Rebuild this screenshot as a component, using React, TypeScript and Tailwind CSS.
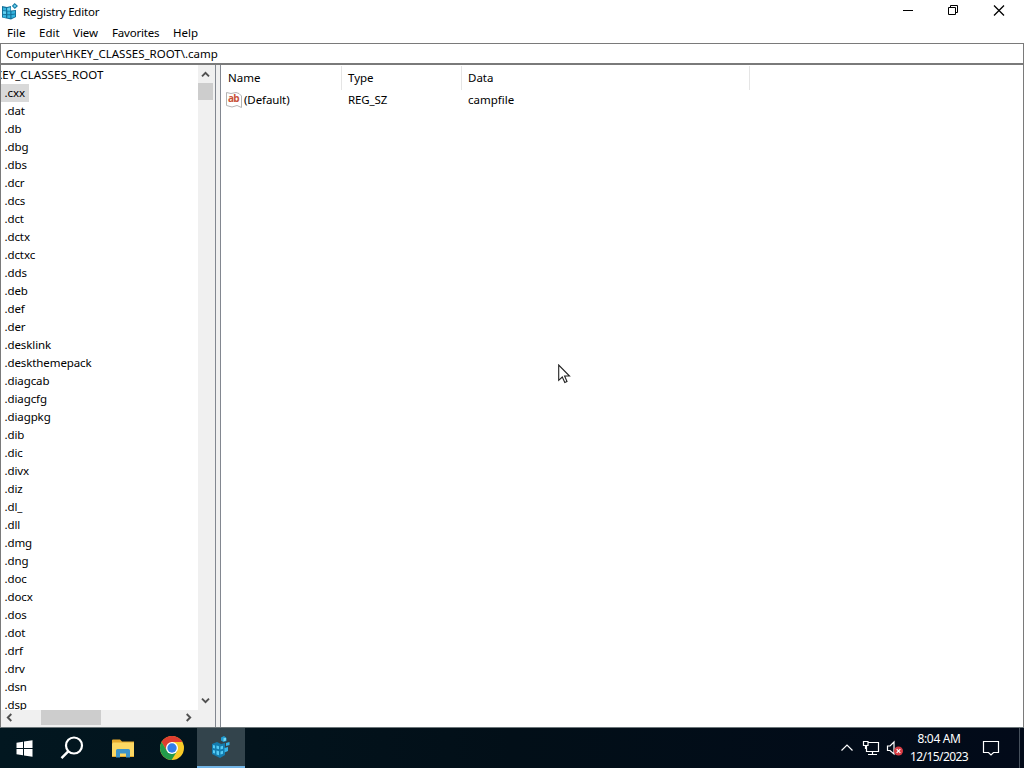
import React from "react";

const keys = [
  ".cxx", ".dat", ".db", ".dbg", ".dbs", ".dcr", ".dcs", ".dct", ".dctx", ".dctxc", ".dds", ".deb",
  ".def", ".der", ".desklink", ".deskthemepack", ".diagcab", ".diagcfg", ".diagpkg", ".dib", ".dic",
  ".divx", ".diz", ".dl_", ".dll", ".dmg", ".dng", ".doc", ".docx", ".dos", ".dot", ".drf", ".drv",
  ".dsn", ".dsp",
];

function Chevron({ d }: { d: string }) {
  return (
    <svg width="9" height="9" viewBox="0 0 9 9" fill="none" stroke="#505050" strokeWidth="1.9">
      <path d={d} />
    </svg>
  );
}

function RegistryIcon() {
  return (
    <svg width="16" height="17" viewBox="0 0 16 17">
      <path d="M0 3L5 4L9 3V7.500L14 7V14L9 16.500L0 14.500Z" fill="#14709a" />
      <path d="M1 4.500l3 .5v2.500l-3-.3zM5.300 5l3-.5v3h-3zM1 8.200l3 .2v2.600l-3-.3zM5.300 8.500h3v2.700h-3zM9.500 8.500l3.500-.5v2.600l-3.500.5zM1 11.700l3 .4v2.600l-3-.5zM5.300 12.200h3V15l-3-.2zM9.500 12l3.500-.6v2.400L9.500 15z" fill="#35b5df" />
      <path d="M5.300 5l3-.5v3h-3zM1 8.200l3 .2v2.600l-3-.3z" fill="#64d0ef" />
      <path d="M12.600 0L16 2.900L12.800 6L9.800 2.900Z" fill="#187ba5" />
      <path d="M12.700 1.500L14.400 2.900L12.800 4.400L11.300 2.900Z" fill="#6bd2ee" />
    </svg>
  );
}

function TitleBar() {
  return (
    <div className="flex h-[23px] items-center pl-[2px]">
      <RegistryIcon />
      <span className="ml-[5px] whitespace-nowrap tracking-[-0.2px]">Registry Editor</span>
      <div className="ml-auto flex h-full items-start">
        <svg width="138" height="23" viewBox="0 0 138 23" fill="none" stroke="#000" strokeWidth="1">
          <path d="M17 10.5H27" />
          <path d="M62.500 7.500H69.500V14.500H62.500ZM64.500 7.500V5.500H71.500V12.500H69.500" />
          <path d="M108 5.500L118 15.500M118 5.500L108 15.500" strokeWidth="1.250" />
        </svg>
      </div>
    </div>
  );
}

function Tree() {
  return (
    <div className="flex w-[215px] flex-col border-r border-[#828790] bg-[#f0f0f0]">
      <div className="flex h-[645px]">
        <div className="w-[197px] overflow-hidden bg-white pt-px">
          <div className="flex h-[18px] items-center whitespace-nowrap">
            <span className="-ml-[6px] tracking-[0.06px]">KEY_CLASSES_ROOT</span>
          </div>
          {keys.map((k, i) => (
            <div key={k} className="flex h-[18px] items-center tracking-[-0.1px]">
              <span className={i === 0 ? "flex h-[18px] w-[28px] items-center bg-[#d9d9d9] pl-[3.5px]" : "pl-[3.5px]"}>{k}</span>
            </div>
          ))}
        </div>
        <div className="flex w-[15px] flex-col items-center">
          <div className="flex h-[18px] items-center"><Chevron d="M1 6.300L4.500 2.800L8 6.300" /></div>
          <div className="h-[17px] w-[15px] bg-[#cdcdcd]" />
          <div className="mt-auto flex h-[19px] items-center"><Chevron d="M1 2.700L4.500 6.200L8 2.700" /></div>
        </div>
      </div>
      <div className="flex h-[15px] items-center">
        <div className="flex w-[17px] justify-center"><Chevron d="M6.300 1L2.800 4.500L6.300 8" /></div>
        <div className="ml-[23px] h-[15px] w-[60px] bg-[#cdcdcd]" />
        <div className="ml-[79px] flex w-[17px] justify-center"><Chevron d="M2.700 1L6.200 4.500L2.700 8" /></div>
      </div>
    </div>
  );
}

function Values() {
  return (
    <div className="flex-1 border-l border-[#828790] pt-px">
      <div className="flex h-[24px] items-center">
        <div className="flex h-full w-[121px] items-center border-r border-[#e5e5e5] pl-[7px]">Name</div>
        <div className="flex h-full w-[120px] items-center border-r border-[#e5e5e5] pl-[6px]">Type</div>
        <div className="flex h-full w-[288px] items-center border-r border-[#e5e5e5] pl-[6px]">Data</div>
      </div>
      <div className="flex h-[20px] items-center">
        <div className="flex w-[121px] items-center pl-[5px]">
          <svg width="17" height="16" viewBox="0 0 17 16">
            <path d="M.5.500L5 1.500L10 .5L13 1.500L15.500 4V15.500L11 13.500L6 15L.5 13.500Z" fill="#fff" stroke="#b4b4b4" />
            <text x="2" y="9.500" fill="#c8523a" fontFamily="Open Sans, sans-serif" fontSize="10" fontWeight="700" textLength="11.500">ab</text>
          </svg>
          <span className="ml-px tracking-[-0.1px]">(Default)</span>
        </div>
        <div className="w-[120px] pl-[6px] tracking-[-0.1px]">REG_SZ</div>
        <div className="pl-[6px]">campfile</div>
      </div>
    </div>
  );
}

function Taskbar() {
  return (
    <div className="flex h-[41px] border-t border-[#6c7679] bg-gradient-to-r from-[#021720] via-[#020f18] to-[#020a19] text-white">
      <div className="flex w-[48px] items-center justify-center">
        <svg width="17" height="17" viewBox="0 0 17 17" fill="#fff">
          <path d="M.5 2.700L7 1.700V8H.5ZM8 1.500L16.500.3V8H8ZM.5 9H7V15.300L.5 14.300ZM8 9H16.500V16.700L8 15.500Z" />
        </svg>
      </div>
      <div className="flex w-[48px] items-center justify-center">
        <svg width="24" height="24" viewBox="0 0 24 24" fill="none" stroke="#fff">
          <circle cx="14" cy="9.500" r="8" strokeWidth="2.200" />
          <path d="M8.500 15.200L1.500 22.200" strokeWidth="2.400" />
        </svg>
      </div>
      <div className="flex w-[53px] items-center justify-center">
        <svg width="22" height="19" viewBox="0 0 22 19">
          <path d="M0 1.500Q0 .5 1 .5H8L10 2.500H22V18H0Z" fill="#e5a92c" />
          <path d="M1 3.500H22V17H0V5Z" fill="#fcd863" />
          <path d="M4 18.500V11.500Q4 10 5.500 10H16.500Q18 10 18 11.500V18.500H14V14.500H8V18.500Z" fill="#3d94c9" />
        </svg>
      </div>
      <div className="flex w-[48px] items-center pl-[11px]">
        <svg width="24" height="24" viewBox="0 0 24 24">
          <circle cx="12" cy="12" r="12" fill="#f9cb28" />
          <path d="M1.600 6A12 12 0 0 1 22.400 6H12L7 15Z" fill="#df3d30" />
          <path d="M1.600 6A12 12 0 0 0 11.600 24L17.200 15L12 17.500L7 15Z" fill="#239b4b" />
          <circle cx="12" cy="12" r="6" fill="#fff" />
          <circle cx="12" cy="12" r="4.700" fill="#327eea" />
        </svg>
      </div>
      <div className="flex w-[48px] items-center justify-center border-b-2 border-[#72b5e6] bg-[#33444c]">
        <svg width="20" height="22" viewBox="0 0 20 22">
          <path d="M1 8L6 6L10 8L14 7V19L9 22L1 18Z" fill="#147cae" />
          <path d="M2 9l2 .6v3l-2-.6zM5.500 9.500l2.500.8v3l-2.500-.8zM2 14l2 .6v3l-2-.6zM5.500 14.500l2.500.8v4l-2.500-.8zM9.500 10.500l2.500-.8v3l-2.500.8zM9.500 15.500l2.500-.8v3l-2.500.8z" fill="#55cbf5" />
          <path d="M10 1.500L13 0L15.500 2V5L12.500 6L10 4.500Z" fill="#219bd0" />
          <path d="M15 7L18.500 6V9L15 10ZM13.500 12L17 11V15L13.500 16.500Z" fill="#35b6ec" />
          <path d="M12.500 2.300L15 1.700V4.500L12.500 5.300Z" fill="#79daf6" />
        </svg>
      </div>
      <div className="ml-auto flex items-center">
        <svg width="64" height="20" viewBox="0 0 64 20" fill="none" stroke="#fff" strokeWidth="1.200">
          <path d="M1.500 12.500L7 7L12.500 12.500" />
          <path d="M28 4.500H38.500V13.500H26.500V8M32.500 13.500V16.500M28 16.500H37M23.500 3.500H28V7.500H23.500ZM25.500 7.500V11" />
          <path d="M47.500 8H50L54 4V16L50 12.500H47.500Z" />
          <circle cx="58.500" cy="13" r="4.500" fill="#d93d45" stroke="none" />
          <path d="M56.700 11.200L60.300 14.800M60.300 11.200L56.700 14.800" />
        </svg>
        <div className="ml-[4px] flex w-[62px] flex-col items-center whitespace-nowrap text-[12px] leading-[18px]">
          <span className="tracking-[-0.35px]">8:04 AM</span>
          <span className="tracking-[-0.57px]">12/15/2023</span>
        </div>
        <svg className="ml-[12px]" width="18" height="18" viewBox="0 0 18 18" fill="none" stroke="#fff" strokeWidth="1.200">
          <path d="M1.500 2.500H16.500V13.500H11.500L9 16L6.500 13.500H1.500Z" />
        </svg>
        <div className="ml-[19px] h-full w-[5px] border-l border-[#46505c]" />
      </div>
    </div>
  );
}

export default function App() {
  return (
    <div className="relative flex h-[768px] w-[1024px] flex-col overflow-hidden bg-white font-['Noto_Sans','Open_Sans',sans-serif] text-[11.5px] leading-[18px] text-black">
      <TitleBar />
      <div className="flex h-[20px] items-center pl-[7px]">
        <span className="w-[32px]">File</span>
        <span className="w-[34px]">Edit</span>
        <span className="w-[39px]">View</span>
        <span className="w-[61px] tracking-[-0.2px]">Favorites</span>
        <span>Help</span>
      </div>
      <div className="flex h-[21px] items-center whitespace-nowrap border border-[#7a7a7a] pl-[5px]">
        <span>Computer\HKEY_CLASSES_ROOT\.camp</span>
      </div>
      <div className="flex h-[663px] border-x border-t border-[#7a7a7a]">
        <Tree />
        <div className="w-[4px] bg-[#f0f0f0]" />
        <Values />
      </div>
      <Taskbar />
      <svg className="absolute left-[558px] top-[364px]" width="13" height="20" viewBox="0 0 13 20">
        <path d="M.7 1V16.300L4.300 13L6.800 18.500L9 17.500L6.600 12H11.500Z" fill="#fff" stroke="#222" strokeWidth="1.100" />
      </svg>
    </div>
  );
}
